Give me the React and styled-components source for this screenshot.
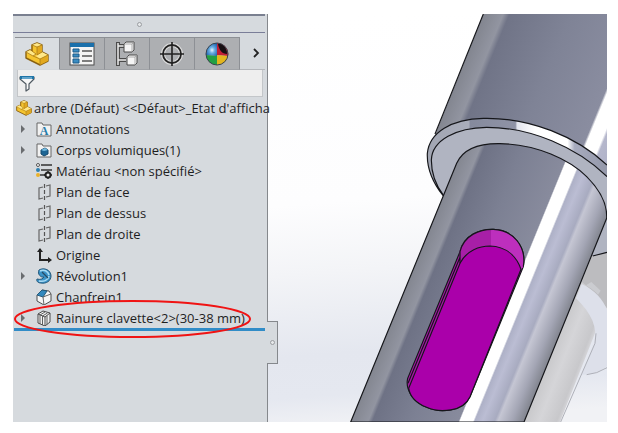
import React, { useState } from "react";
import styled, { createGlobalStyle } from "styled-components";

const treeItems = [
  { icon: "annotations", label: "Annotations", expandable: true },
  { icon: "bodies", label: "Corps volumiques(1)", expandable: true },
  { icon: "material", label: "Matériau <non spécifié>" },
  { icon: "plane", label: "Plan de face" },
  { icon: "plane", label: "Plan de dessus" },
  { icon: "plane", label: "Plan de droite" },
  { icon: "origin", label: "Origine" },
  { icon: "revolve", label: "Révolution1", expandable: true },
  { icon: "chamfer", label: "Chanfrein1" },
  { icon: "library", label: "Rainure clavette<2>(30-38 mm)", expandable: true, marked: true },
];

const tabs = [
  { id: "tree", label: "Arbre de création" },
  { id: "properties", label: "Propriétés" },
  { id: "configurations", label: "Configurations" },
  { id: "dimensions", label: "Cotes" },
  { id: "appearance", label: "Apparences" },
];

const PartIcon = ({ size }) => (
  <svg width={size} height={size} viewBox="0 0 24 24" strokeLinejoin="round">
    <path d="M1 10l4-2 2 1V3l5-2 5 2v7l6 3v6l-8 4L1 16z" fill="#f5c42f" stroke="#8a6212" strokeWidth="1.4" />
    <path d="M7 3l5-2 5 2-5 2zM1 10l4-2 6 4-3 2zM11 14l6-4 6 3-8 4z" fill="#ffe889" />
    <path d="M12 5l5-2v7l-5 3zM15 17l8-4v6l-8 4z" fill="#e2a91f" />
    <path d="M7 3l5 2v8M7 3v6l4 3-3 2-7-4M15 17v6M12 5l5-2M8 14l7 3 8-4M12 13l5-3" fill="none" stroke="#a97b18" strokeWidth=".8" />
  </svg>
);

const TabIcon = ({ id }) => {
  if (id === "tree") return <PartIcon size={24} />;
  if (id === "properties")
    return (
      <svg width="26" height="24" viewBox="0 0 26 24">
        <rect x="1" y="1" width="24" height="22" fill="#f4f4f4" stroke="#4d4d4d" />
        <path d="M1 1h24v4H1z" fill="#1b70ab" />
        <path d="M4 7h6v3H4zM4 12h6v3H4zM4 17h6v4H4z" fill="#3a8cc2" stroke="#1d5a88" />
        <path d="M13 9h10M13 14h10M13 19h10" stroke="#555" strokeWidth="1.3" />
      </svg>
    );
  if (id === "configurations")
    return (
      <svg width="22" height="26" viewBox="0 0 22 26">
        <path d="M2 1v24M2 5h8M2 19h8" fill="none" stroke="#4b4b4b" strokeWidth="4" />
        <path d="M2 2v22M2 5h8M2 19h8" fill="none" stroke="#ededed" strokeWidth="1.5" />
        <path d="M8 3l2-2h8v8l-2 2H8zM11 16l2-2h8v8l-2 2h-8z" fill="#f5f5f5" stroke="#4b4b4b" strokeLinejoin="round" />
        <path d="M8 3h8v8M16 3l2-2M11 16h8v8M19 16l2-2" fill="none" stroke="#9b9b9b" strokeWidth=".8" />
      </svg>
    );
  if (id === "dimensions")
    return (
      <svg width="24" height="26" viewBox="0 0 24 26" fill="none">
        <circle cx="12" cy="13" r="9" stroke="#ddd" strokeWidth="4" />
        <circle cx="12" cy="13" r="9" stroke="#222" strokeWidth="1.8" />
        <path d="M12 1v24M0 13h24" stroke="#222" strokeWidth="1.6" />
      </svg>
    );
  return (
    <svg width="24" height="24" viewBox="0 0 24 24">
      <defs>
        <radialGradient id="ballBlue" cx=".55" cy=".55" r=".6">
          <stop offset="0" stopColor="#e7f6ff" />
          <stop offset=".4" stopColor="#69acdf" />
          <stop offset="1" stopColor="#1d64b0" />
        </radialGradient>
      </defs>
      <path d="M12 14L1 13A11 11 0 0 1 12 1z" fill="url(#ballBlue)" />
      <path d="M12 1a11 11 0 0 1 11 13l-11-1z" fill="#c21f38" />
      <path d="M13 2c5-1 9 4 9 10-5 0-8-4-9-10z" fill="#160e12" />
      <path d="M1 13l11 1v9A11 11 0 0 1 1 13z" fill="#22a043" />
      <path d="M12 13l11 1a11 11 0 0 1-11 9z" fill="#e3b51d" />
      <circle cx="12" cy="12" r="11" fill="none" stroke="#39434d" />
    </svg>
  );
};

const FilterIcon = () => (
  <svg width="16" height="17" viewBox="0 0 16 17">
    <path d="M1 2h14v2l-5 5v5l-3 2V9L1 4z" fill="#f7f7f7" stroke="#505a62" strokeWidth="1.2" strokeLinejoin="round" />
    <path d="M1 1h14v3H1z" fill="#1f75a8" />
    <path d="M3 3h10" stroke="#a8d4ec" />
  </svg>
);

const TreeIcon = ({ name }) => {
  const shapes = {
    annotations: (
      <>
        <path d="M1 15V2h5l1 2h8v11z" fill="#f2f2f2" stroke="#666" />
        <text x="8" y="14" textAnchor="middle" fontFamily="Liberation Serif, serif" fontSize="12" fontWeight="bold" fill="#267cab">
          A
        </text>
      </>
    ),
    bodies: (
      <>
        <path d="M1 15V2h5l1 2h8v11z" fill="#f2f2f2" stroke="#666" />
        <path d="M5 8l4-2 3 2v4l-4 2-3-2z" fill="#1d6594" stroke="#174a6c" />
        <path d="M5 8l4-2 3 2-4 1z" fill="#72b9de" />
      </>
    ),
    material: (
      <>
        <path d="M5 2h11M5 7h11M4 12h5" stroke="#333" strokeWidth="1.6" />
        <circle cx="2" cy="2" r="1.5" fill="#fff" stroke="#555" />
        <circle cx="2" cy="7" r="2" fill="#2d80b1" />
        <circle cx="2" cy="12" r="2" fill="#eab12b" />
        <circle cx="12" cy="12" r="2.5" fill="#eee" stroke="#222" strokeWidth="2" />
        <path d="M12 8v2M12 14v2M8 12h2M14 12h2" stroke="#222" strokeWidth="1.4" />
      </>
    ),
    plane: (
      <>
        <path d="M7 3L3 4v11l4-1M10 2l4-1v11l-4 1" fill="none" stroke="#666" strokeWidth="1.2" />
        <path d="M8.500 0v16" stroke="#555" strokeWidth="1.2" strokeDasharray="4 2" />
      </>
    ),
    origin: (
      <>
        <path d="M4 2v11h10" fill="none" stroke="#222" strokeWidth="2" />
        <path d="M1 5l3-4 3 4zM12 10l4 3-4 3z" fill="#222" />
      </>
    ),
    revolve: (
      <>
        <path d="M3 2c5-3 12 0 12 6 0 5-5 8-10 7-3 0-5-2-4-4 3 1 6 0 7-2-3 1-7-3-5-7z" fill="#3c93c8" stroke="#24587a" />
        <path d="M4 3c4-2 8 0 9 4M3 13c5 1 9-1 10-5" fill="none" stroke="#a8daf3" strokeWidth="1.6" />
        <path d="M6 4l6 6" stroke="#284b63" strokeWidth="1.3" />
      </>
    ),
    chamfer: (
      <>
        <path d="M1 6l5-5 7 1 2 3v7l-7 4-7-4z" fill="#f6f6f6" stroke="#4c4c4c" strokeLinejoin="round" />
        <path d="M1 6l5-5 5 1-4 6z" fill="#3288bd" stroke="#265a7a" />
        <path d="M7 8l1 8M7 8l8-3" fill="none" stroke="#666" />
      </>
    ),
    library: (
      <>
        <path d="M2 4l5-3 7 2v9l-5 4-7-3z" fill="#f1f1f1" stroke="#4a4a4a" strokeLinejoin="round" />
        <path d="M2 4l7 3v9M9 7l5-4" fill="none" stroke="#4a4a4a" />
        <path d="M4 5v9M6.500 6v9M11 5.500v9M4 5l5-3M6.500 6l5-3" fill="none" stroke="#5e5e5e" />
      </>
    ),
  };
  return (
    <svg width="16" height="16" viewBox="0 0 16 16">
      {shapes[name]}
    </svg>
  );
};

// shaft with its collar, keyway and the reflection on the floor
const ShaftView = () => (
  <Scene viewBox="-6 42 1017 1224" preserveAspectRatio="xMinYMin slice" role="img" aria-label="arbre">
    <defs>
      <linearGradient id="sky" gradientUnits="userSpaceOnUse" x1="330" y1="42" x2="420" y2="1266">
        <stop offset="0" stopColor="#ffffff" />
        <stop offset=".45" stopColor="#fdfdfe" />
        <stop offset=".62" stopColor="#f3f4f7" />
        <stop offset=".82" stopColor="#e4e7ef" />
        <stop offset=".92" stopColor="#e5e8f0" />
        <stop offset="1" stopColor="#f1f2f5" />
      </linearGradient>
      <linearGradient id="upper" gradientUnits="userSpaceOnUse" x1="640" y1="42" x2="1282" y2="305">
        <stop offset="0" stopColor="#82858f" />
        <stop offset=".08" stopColor="#9295a1" />
        <stop offset=".105" stopColor="#707487" />
        <stop offset=".35" stopColor="#7f8396" />
        <stop offset=".615" stopColor="#8a8da0" />
        <stop offset=".625" stopColor="#ffffff" />
        <stop offset=".68" stopColor="#ffffff" />
        <stop offset=".69" stopColor="#b5b7cc" />
        <stop offset="1" stopColor="#9da0b8" />
      </linearGradient>
      <linearGradient id="lower" gradientUnits="userSpaceOnUse" x1="242" y1="1265" x2="687" y2="1447">
        <stop offset="0" stopColor="#838690" />
        <stop offset=".1" stopColor="#9295a1" />
        <stop offset=".125" stopColor="#6e7285" />
        <stop offset=".35" stopColor="#7c8093" />
        <stop offset=".622" stopColor="#888b9d" />
        <stop offset=".63" stopColor="#ffffff" />
        <stop offset=".705" stopColor="#ffffff" />
        <stop offset=".715" stopColor="#aeb1c7" />
        <stop offset=".76" stopColor="#bbbdd3" />
        <stop offset=".83" stopColor="#a8abc0" />
        <stop offset=".85" stopColor="#c5c6d3" />
        <stop offset=".93" stopColor="#a4a6b5" />
        <stop offset="1" stopColor="#82858f" />
      </linearGradient>
      <linearGradient id="reflection" gradientUnits="userSpaceOnUse" x1="780" y1="1150" x2="960" y2="1220">
        <stop offset="0" stopColor="#c1c1c3" />
        <stop offset=".35" stopColor="#d5d5d8" />
        <stop offset=".6" stopColor="#c8c8cb" />
        <stop offset=".7" stopColor="#dedee2" />
        <stop offset="1" stopColor="#cecfd5" />
      </linearGradient>
      <linearGradient id="chamferBand" gradientUnits="userSpaceOnUse" x1="472" y1="0" x2="1011" y2="0">
        <stop offset="0" stopColor="#a2a6b3" />
        <stop offset=".23" stopColor="#a9adba" />
        <stop offset=".24" stopColor="#858a9d" />
        <stop offset=".49" stopColor="#8f93a6" />
        <stop offset=".5" stopColor="#e3e5ee" />
        <stop offset=".6" stopColor="#ffffff" />
        <stop offset=".78" stopColor="#ffffff" />
        <stop offset=".82" stopColor="#a7abbe" />
        <stop offset="1" stopColor="#9498aa" />
      </linearGradient>
      <clipPath id="keyEnd">
        <path d="M568 790V755C582 705 630 687 670 688C730 690 770 740 760 800L753 808C740 770 710 740 660 738C630 738 590 750 568 790Z" />
      </clipPath>
    </defs>
    <rect x="-6" y="42" width="1500" height="1800" fill="url(#sky)" />

    <path d="M965 770L1011 757V935L975 1000L870 1266H740Z" fill="url(#reflection)" />
    <path d="M965 770L1011 757V925C985 890 965 870 935 845Z" fill="#bcbcbf" />
    <path d="M935 852C975 870 1000 900 1011 930V1098C990 1115 965 1124 935 1124L972 1030C985 985 965 940 918 895Z" fill="#dde0ea" />
    <path d="M948 856C966 868 976 874 984 884L992 872L964 846Z" fill="#cbccd0" />
    <path d="M978 1000L975 1030L872 1266M1011 1103Q980 1122 950 1124" fill="none" stroke="#aeb0b8" strokeWidth="3" />

    <path d="M640 42H1011V495L900 470L600 500L472 460L495 405Z" fill="url(#upper)" />
    <path d="M640 42L495 402" stroke="#15161a" strokeWidth="3.5" />

    <path d="M520 588C490 550 470 510 472 460C478 397 545 357 640 355C780 352 920 410 1011 495V757L968 768L700 600Z" fill="url(#chamferBand)" />
    <path d="M520 585C497 555 484 520 484 480C486 420 560 383 650 382C780 382 920 440 1011 530V757L968 768L700 600Z" fill="#b0b4c1" />
    <path
      d="M520 588C490 550 470 510 472 460C478 397 545 357 640 355C780 352 920 410 1011 495M520 585C497 555 484 520 484 480C486 420 560 383 650 382C780 382 920 440 1011 530M968 768L1011 757"
      fill="none"
      stroke="#15161a"
      strokeWidth="3.5"
    />

    <path
      d="M242 1266L560 490C580 445 630 430 690 431C800 432 900 480 950 530C995 575 1012 615 1010 655L762 1266Z"
      fill="url(#lower)"
      stroke="#15161a"
      strokeWidth="3.5"
    />

    <path
      d="M570 755C582 705 630 687 670 688C730 690 770 740 760 800L600 1190C580 1235 510 1240 470 1222C430 1205 405 1170 413 1135Z"
      fill="#a616a6"
      stroke="#15161a"
      strokeWidth="3.5"
    />
    <g clipPath="url(#keyEnd)">
      <rect x="560" y="680" width="103" height="130" fill="#a71fa7" />
      <rect x="663" y="680" width="110" height="130" fill="#bd2fbd" />
    </g>
    <path
      d="M570 790C590 750 630 738 660 738C710 740 740 770 753 808L600 1190C580 1235 510 1240 470 1222C440 1210 420 1190 416 1165Z"
      fill="#aa00aa"
      stroke="#15161a"
      strokeWidth="3.5"
    />
    <path
      d="M570 790V755C582 705 630 687 670 688C730 690 770 740 760 800M570 772L414 1150"
      fill="none"
      stroke="#15161a"
      strokeWidth="3.5"
    />
  </Scene>
);

const App = () => {
  const [activeTab, setActiveTab] = useState("tree");
  const [filter, setFilter] = useState("");

  return (
    <>
      <GlobalStyle />
      <Page>
        <Panel>
          <Grip>
            <Dot />
          </Grip>
          <TabBar>
            {tabs.map((tab) => (
              <Tab key={tab.id} aria-label={tab.label} $active={activeTab === tab.id} onClick={() => setActiveTab(tab.id)}>
                <TabIcon id={tab.id} />
              </Tab>
            ))}
            <MoreBtn aria-label="Plus">
              <svg width="8" height="10" viewBox="0 0 8 10">
                <path d="M2 1l4 4-4 4" fill="none" stroke="#222" strokeWidth="1.8" />
              </svg>
            </MoreBtn>
          </TabBar>
          <FilterBox>
            <FilterIcon />
            <input aria-label="Filtre" value={filter} onChange={(e) => setFilter(e.target.value)} />
          </FilterBox>
          <RootRow>
            <PartIcon size={16} />
            <span>{"arbre (Défaut) <<Défaut>_Etat d'afficha"}</span>
          </RootRow>
          <Tree>
            {treeItems.map((item) => (
              <TreeRow key={item.label}>
                <Arrow $visible={item.expandable} />
                <TreeIcon name={item.icon} />
                <span>{item.label}</span>
                {item.marked ? (
                  <Marker viewBox="0 0 240 40" preserveAspectRatio="none">
                    <ellipse cx="120" cy="20" rx="118" ry="18" fill="none" stroke="#f01414" strokeWidth="2" />
                  </Marker>
                ) : null}
              </TreeRow>
            ))}
          </Tree>
          <RollbackBar />
          <Handle aria-label="Réduire">
            <Dot />
          </Handle>
        </Panel>
        <Viewport>
          <ShaftView />
        </Viewport>
      </Page>
    </>
  );
};

const GlobalStyle = createGlobalStyle`
  * {
    box-sizing: border-box;
  }
  body {
    margin: 0;
    background: white;
    font-family: "Open Sans", "Noto Sans", sans-serif;
    font-size: 13px;
    color: #1e1e1e;
  }
  button {
    padding: 0;
    border: none;
    background: none;
    cursor: pointer;
  }
  svg {
    flex-shrink: 0;
  }
`;

const Page = styled.main`
  display: flex;
  min-height: 100vh;
  padding: 14px 11px 11px 13px;
`;

const Panel = styled.aside`
  position: relative;
  display: flex;
  flex-direction: column;
  flex: 0 0 255px;
  min-width: 0;
  background: #d6dade;
  border-right: 1px solid #85888c;
`;

const Grip = styled.div`
  display: flex;
  align-items: center;
  justify-content: center;
  height: 19px;
  margin-right: 2px;
  border-top: 2px solid #7a8090;
  border-bottom: 1px solid #7a7e98;
`;

const Dot = styled.span`
  width: 5px;
  height: 5px;
  border: 1px solid #9a9da1;
  border-radius: 50%;
  background: #e6e8ea;
`;

const TabBar = styled.div`
  display: flex;
  height: 33px;
  margin: 4px 2px 0 2px;
`;

const Tab = styled.button`
  display: flex;
  align-items: center;
  justify-content: center;
  width: 45px;
  border-top: 1px solid #8d9095;
  border-right: 1px solid #8d9095;
  border-bottom: 1px solid ${(props) => (props.$active ? "#d6dade" : "#a0a3a7")};
  background: ${(props) => (props.$active ? "#d9dde1" : "#adafb2")};
`;

const MoreBtn = styled.button`
  display: flex;
  align-items: center;
  justify-content: center;
  flex: 1;
  padding-left: 6px;
  border-bottom: 1px solid #b4b7bb;
`;

const FilterBox = styled.label`
  display: flex;
  align-items: center;
  height: 27px;
  margin: 0 4px;
  padding: 0 1px;
  background: #eeeeee;
  border: 1px solid #c3c6c9;
  border-top: none;
  input {
    flex: 1;
    min-width: 0;
    border: none;
    outline: none;
    background: transparent;
    font: inherit;
  }
`;

const RootRow = styled.div`
  display: flex;
  align-items: center;
  gap: 2px;
  height: 21px;
  padding-left: 3px;
  white-space: nowrap;
`;

const Tree = styled.ul`
  margin: 0;
  padding: 0;
  list-style: none;
`;

const TreeRow = styled.li`
  position: relative;
  display: flex;
  align-items: center;
  height: 21px;
  padding-left: 8px;
  white-space: nowrap;
  span {
    margin-left: 4px;
  }
`;

const Arrow = styled.i`
  width: 4px;
  margin-right: 11px;
  border: 4px solid transparent;
  border-left: 4px solid ${(props) => (props.$visible ? "#6a6d70" : "transparent")};
  border-right: none;
`;

const Marker = styled.svg`
  position: absolute;
  top: -8px;
  left: 0;
  width: 239px;
  height: 40px;
  z-index: 2;
  pointer-events: none;
`;

const RollbackBar = styled.div`
  height: 3px;
  margin: 0 2px 0 1px;
  background: #318cc7;
`;

const Handle = styled.button`
  position: absolute;
  top: 307px;
  right: -11px;
  display: flex;
  align-items: center;
  justify-content: center;
  width: 11px;
  height: 43px;
  background: #d6dade;
  border: 1px solid #85888c;
  border-left: none;
`;

const Viewport = styled.section`
  display: flex;
  flex: 1;
  min-width: 0;
`;

const Scene = styled.svg`
  flex: 1;
  width: 100%;
  min-width: 0;
`;

export default App;
